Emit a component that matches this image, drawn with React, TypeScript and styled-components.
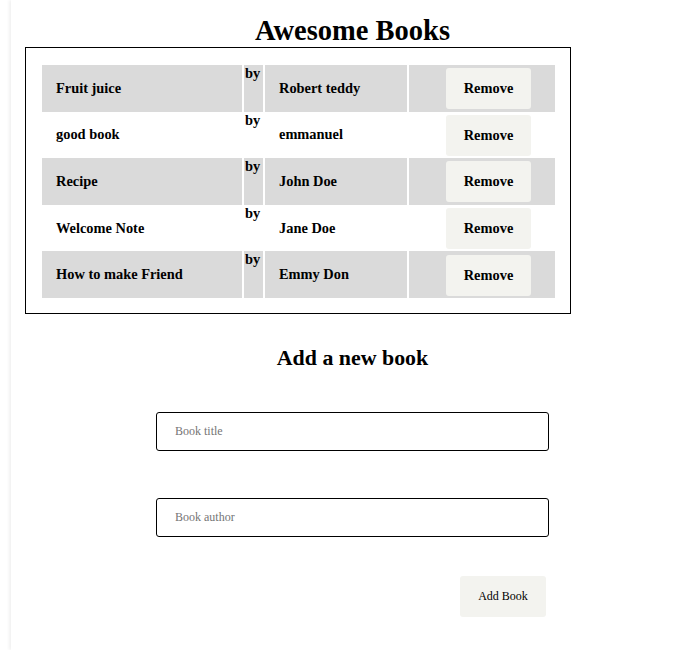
import React from "react";
import styled, { createGlobalStyle } from "styled-components";

const GlobalStyle = createGlobalStyle`
  html, body { margin: 0; padding: 0; background: #fff; }
  body { font-family: "Liberation Serif", "Times New Roman", serif; color: #000; }
`;

const Main = styled.main`
  margin-left: 11px;
  min-height: 650px;
  box-shadow: -2px 0 3px rgba(0, 0, 0, 0.06);
  display: flex;
  flex-direction: column;
  align-items: center;
  padding-top: 14px;
  box-sizing: border-box;
`;

const Title = styled.h1`
  margin: 0;
  font-size: 28.5px;
  line-height: 33px;
  font-weight: bold;
`;

const ListBox = styled.section`
  align-self: flex-start;
  margin-left: 14px;
  width: 546px;
  box-sizing: border-box;
  border: 1px solid #000;
  padding: 17px 15px 15px 16px;
`;

const Table = styled.table`
  width: 513px;
  border-collapse: collapse;
  table-layout: fixed;
  font-size: 14.4px;
  font-weight: bold;
`;

const Row = styled.tr<{ $shaded: boolean }>`
  height: 46.6px;
  background: ${(p) => (p.$shaded ? "#dadada" : "#fff")};
`;

const Cell = styled.td<{ $w: number; $pad?: number; $top?: boolean; $last?: boolean }>`
  width: ${(p) => p.$w}px;
  padding: 0 0 0 ${(p) => p.$pad ?? 0}px;
  vertical-align: ${(p) => (p.$top ? "top" : "middle")};
  border-right: ${(p) => (p.$last ? "none" : "2px solid #fff")};
  box-sizing: border-box;
  line-height: 17px;
`;

const RemoveButton = styled.button`
  width: 85px;
  height: 41px;
  border: none;
  border-radius: 3px;
  background: #f3f3ef;
  font-family: "Liberation Serif", "Times New Roman", serif;
  font-size: 14.4px;
  font-weight: bold;
  color: #000;
  display: block;
  margin-top: 1px;
`;

const Form = styled.form`
  display: flex;
  flex-direction: column;
  align-items: center;
  width: 393px;
  margin-top: 31px;
`;

const SubTitle = styled.h2`
  margin: 0 0 42px;
  font-size: 21.9px;
  line-height: 25px;
  font-weight: bold;
`;

const Input = styled.input`
  width: 393px;
  height: 39px;
  box-sizing: border-box;
  border: 1px solid #000;
  border-radius: 3px;
  padding: 0 18px;
  font-family: "Liberation Serif", "Times New Roman", serif;
  font-size: 12px;
  margin-bottom: 47px;
  outline: none;
  &::placeholder { color: #757575; }
`;

const AddButton = styled.button`
  align-self: flex-end;
  margin-right: 3px;
  margin-top: -8px;
  width: 86px;
  height: 41px;
  border: none;
  border-radius: 3px;
  background: #f3f3ef;
  font-family: "Liberation Serif", "Times New Roman", serif;
  font-size: 12px;
  color: #000;
`;

const books = [
  { title: "Fruit juice", author: "Robert teddy" },
  { title: "good book", author: "emmanuel" },
  { title: "Recipe", author: "John Doe" },
  { title: "Welcome Note", author: "Jane Doe" },
  { title: "How to make Friend", author: "Emmy Don" },
];

export default function App() {
  return (
    <>
      <GlobalStyle />
      <Main>
        <Title>Awesome Books</Title>
        <ListBox>
          <Table>
            <tbody>
              {books.map((b, i) => (
                <Row key={b.title} $shaded={i % 2 === 0}>
                  <Cell $w={201} $pad={14}>{b.title}</Cell>
                  <Cell $w={21} $pad={1} $top>by</Cell>
                  <Cell $w={144} $pad={14}>{b.author}</Cell>
                  <Cell $w={147} $pad={37} $last>
                    <RemoveButton type="button">Remove</RemoveButton>
                  </Cell>
                </Row>
              ))}
            </tbody>
          </Table>
        </ListBox>
        <Form onSubmit={(e) => e.preventDefault()}>
          <SubTitle>Add a new book</SubTitle>
          <Input placeholder="Book title" />
          <Input placeholder="Book author" />
          <AddButton type="submit">Add Book</AddButton>
        </Form>
      </Main>
    </>
  );
}
